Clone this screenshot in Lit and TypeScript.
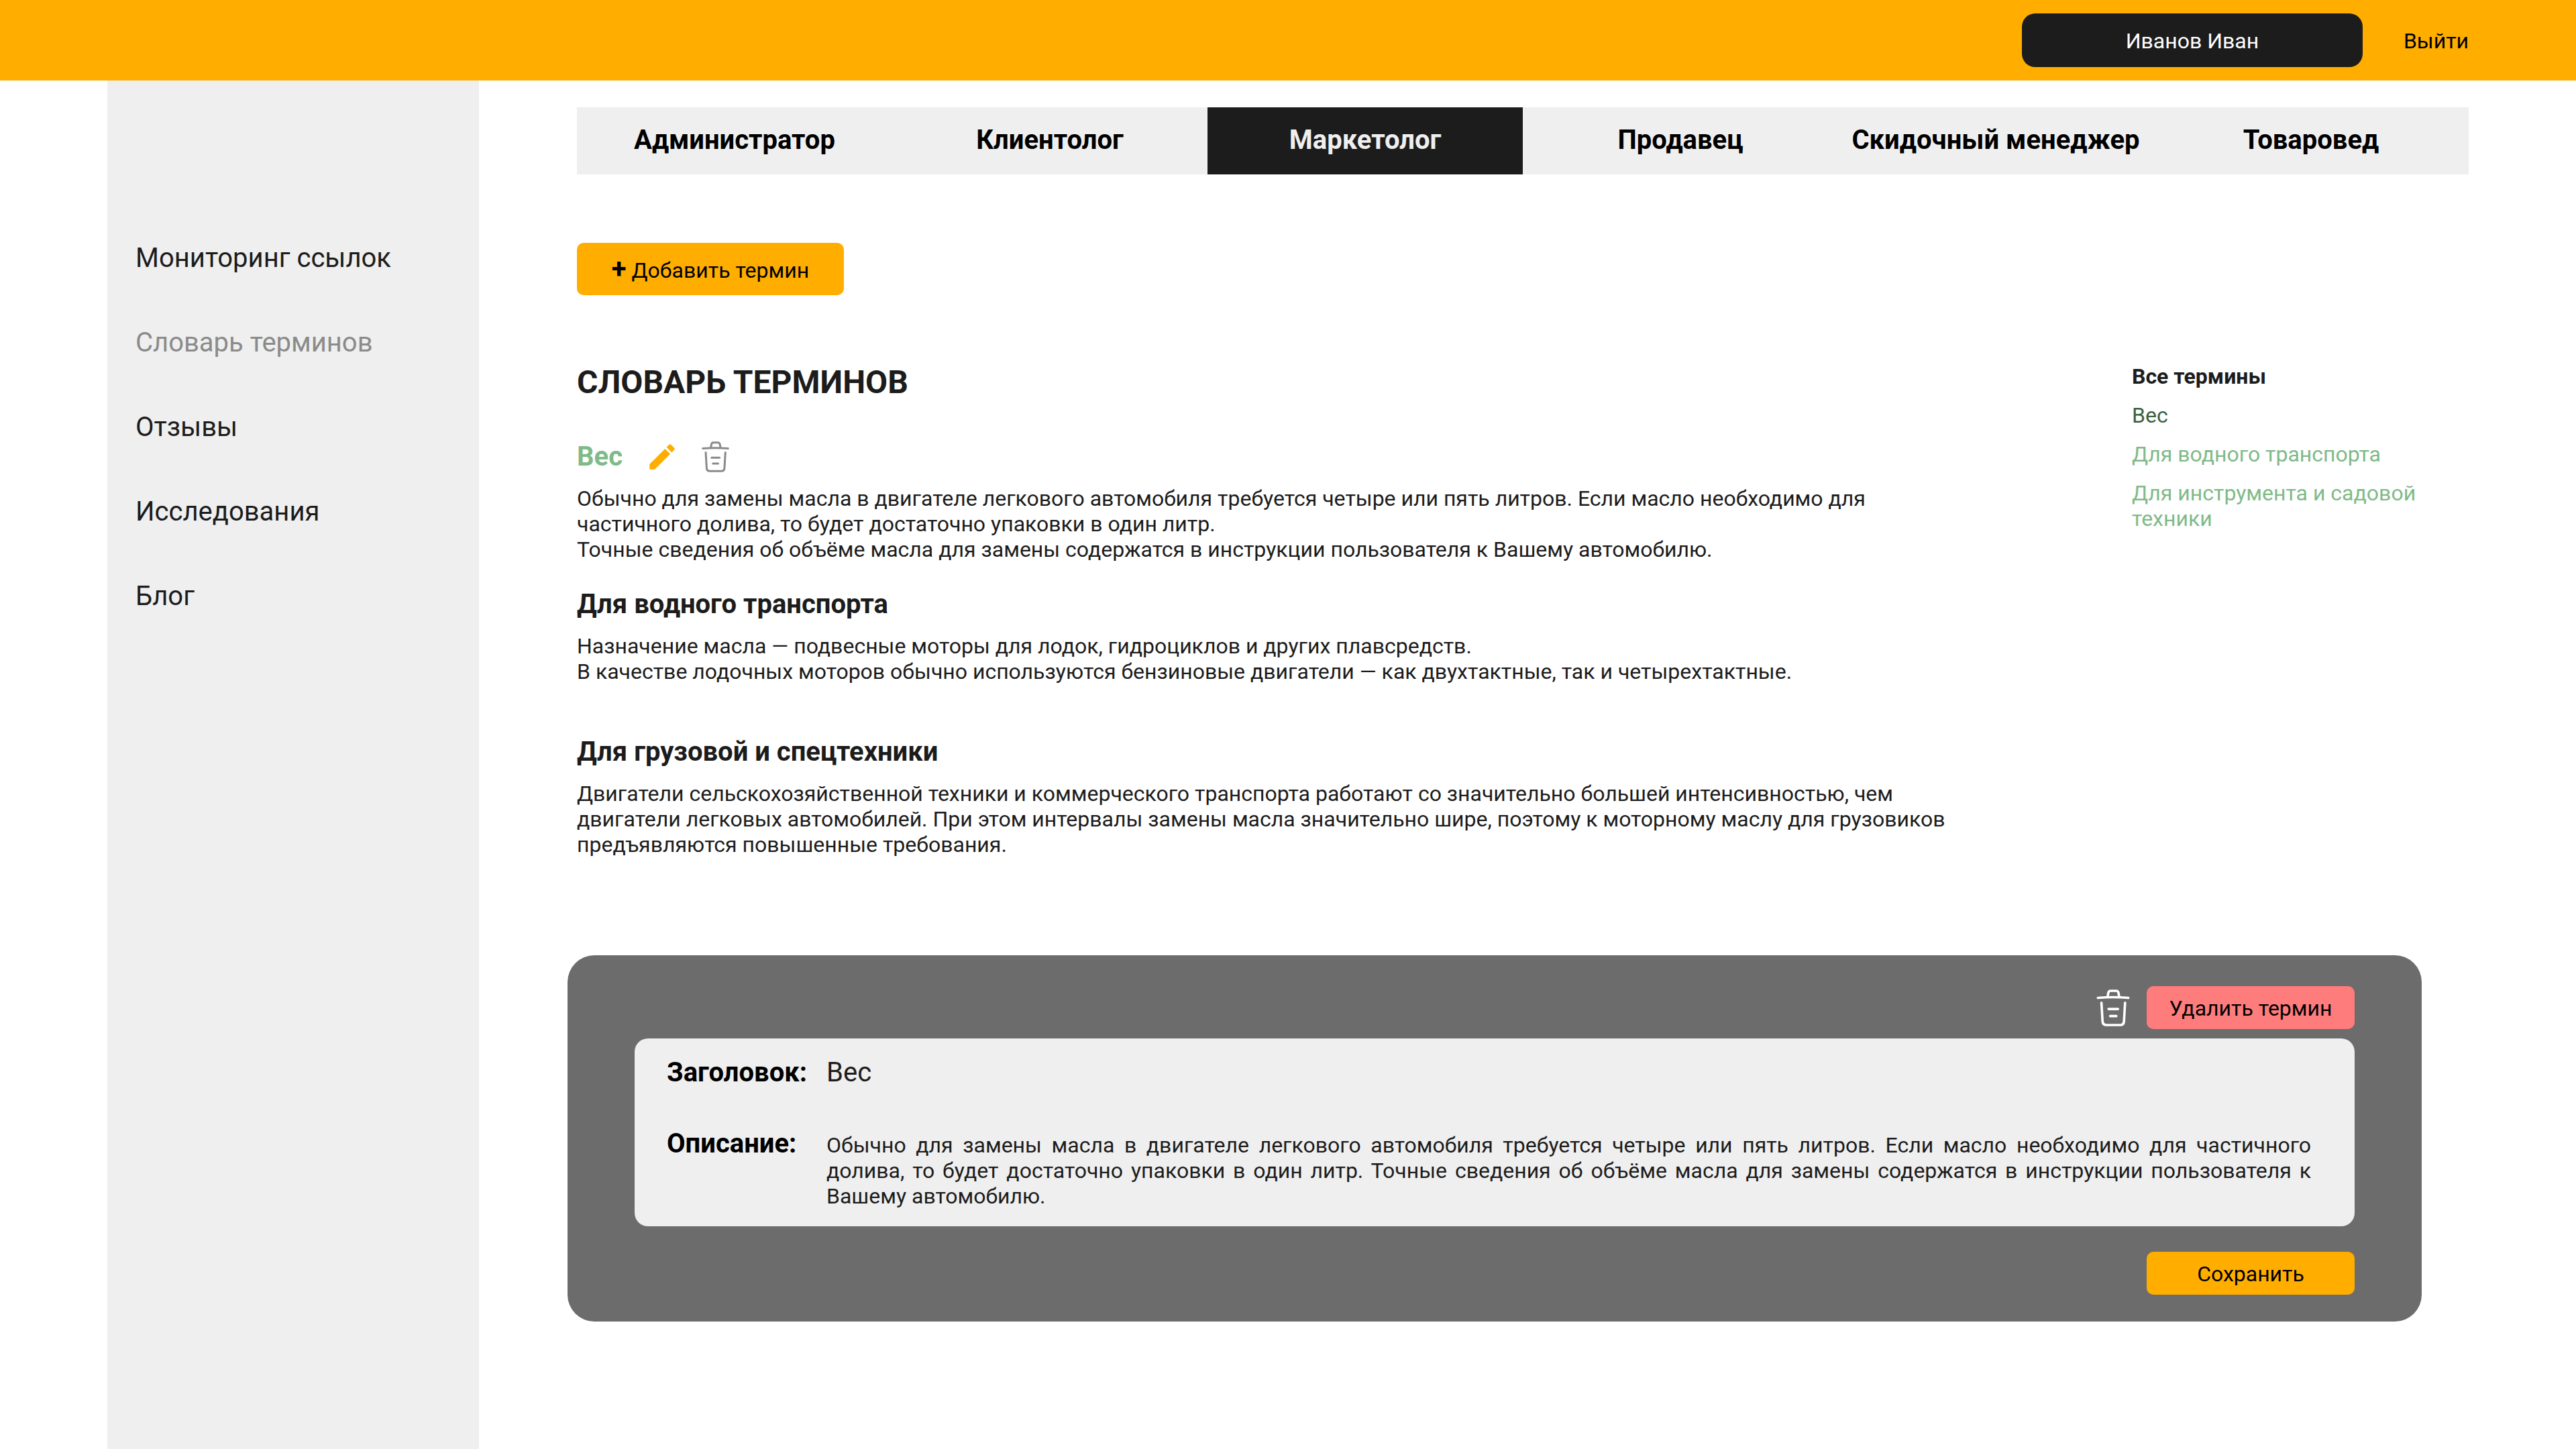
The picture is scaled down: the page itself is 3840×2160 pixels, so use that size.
import { LitElement, html, css, svg } from "lit";
import { customElement, property, state } from "lit/decorators.js";

interface Term {
  title: string;
  lines: string[];
  editable?: boolean;
}

const ROLES = [
  "Администратор",
  "Клиентолог",
  "Маркетолог",
  "Продавец",
  "Скидочный менеджер",
  "Товаровед",
];

const SECTIONS = [
  "Мониторинг ссылок",
  "Словарь терминов",
  "Отзывы",
  "Исследования",
  "Блог",
];

const TERMS: Term[] = [
  {
    title: "Вес",
    editable: true,
    lines: [
      "Обычно для замены масла в двигателе легкового автомобиля требуется четыре или пять литров. Если масло необходимо для частичного долива, то будет достаточно упаковки в один литр.",
      "Точные сведения об объёме масла для замены содержатся в инструкции пользователя к Вашему автомобилю.",
    ],
  },
  {
    title: "Для водного транспорта",
    lines: [
      "Назначение масла — подвесные моторы для лодок, гидроциклов и других плавсредств.",
      "В качестве лодочных моторов обычно используются бензиновые двигатели — как двухтактные, так и четырехтактные.",
      "",
    ],
  },
  {
    title: "Для грузовой и спецтехники",
    lines: [
      "Двигатели сельскохозяйственной техники и коммерческого транспорта работают со значительно большей интенсивностью, чем двигатели легковых автомобилей. При этом интервалы замены масла значительно шире, поэтому к моторному маслу для грузовиков предъявляются повышенные требования.",
    ],
  },
];

const TERM_LINKS = ["Вес", "Для водного транспорта", "Для инструмента и садовой техники"];

@customElement("trash-icon")
export class TrashIcon extends LitElement {
  static styles = css`
    :host {
      display: block;
    }
    .icon {
      display: block;
      width: 100%;
      height: 100%;
      fill: none;
      stroke: currentColor;
      stroke-width: 9;
      stroke-linecap: round;
      stroke-linejoin: round;
    }
  `;

  render() {
    return html`<svg class="icon" viewBox="0 0 122 136" aria-hidden="true">
      ${svg`
        <path d="M5 31Q61 26 117 31" />
        <path d="M41 26L43 13Q45 5 51 5H73Q79 5 81 13L83 26" />
        <path d="M18 49L22 118Q23 131 36 131H88Q100 131 101 118L105 49" />
        <path d="M44 72H79" />
        <path d="M50 98H73" />
      `}
    </svg>`;
  }
}

@customElement("term-article")
export class TermArticle extends LitElement {
  @property({ attribute: false }) term!: Term;

  static styles = css`
    :host {
      display: block;
    }
    .head {
      display: flex;
      align-items: center;
      height: 50px;
      margin-bottom: 18px;
    }
    .title {
      margin: 0;
      font-size: 40px;
      line-height: 50px;
      font-weight: 700;
    }
    .title.current {
      color: #7fba88;
    }
    .tool {
      display: block;
      margin: 0;
      padding: 0;
      border: 0;
      background: none;
      cursor: pointer;
    }
    .edit {
      width: 50px;
      height: 50px;
      margin-left: 34px;
      color: #ffae00;
    }
    .edit svg {
      display: block;
      width: 100%;
      height: 100%;
      fill: currentColor;
    }
    .remove {
      margin-left: 34px;
      color: #8b8b8b;
    }
    .remove trash-icon {
      width: 41px;
      height: 46px;
    }
    .line {
      margin: 0;
      min-height: 38px;
      font-size: 32px;
      line-height: 38px;
    }
  `;

  render() {
    const { title, lines, editable } = this.term;
    return html`
      <div class="head">
        <h2 class="title ${editable ? "current" : ""}">${title}</h2>
        ${editable
          ? html`
              <button class="tool edit" type="button" aria-label="Редактировать">
                <svg viewBox="0 0 24 24" aria-hidden="true">
                  <path
                    d="M3 17.25V21h3.75L17.81 9.94l-3.75-3.75L3 17.25zM20.71 7.04c.39-.39.39-1.02 0-1.41l-2.34-2.34c-.39-.39-1.02-.39-1.41 0l-1.83 1.83 3.75 3.75 1.83-1.83z"
                  />
                </svg>
              </button>
              <button class="tool remove" type="button" aria-label="Удалить">
                <trash-icon></trash-icon>
              </button>
            `
          : ""}
      </div>
      ${lines.map((line) => html`<p class="line">${line}</p>`)}
    `;
  }
}

@customElement("term-editor")
export class TermEditor extends LitElement {
  static styles = css`
    :host {
      display: block;
      box-sizing: border-box;
      padding: 46px 100px 40px;
      border-radius: 40px;
      background: #6c6c6c;
    }
    .actions {
      display: flex;
      align-items: center;
      justify-content: flex-end;
      gap: 25px;
    }
    .bin {
      width: 50px;
      height: 55px;
      color: #ffffff;
    }
    .button {
      width: 310px;
      height: 64px;
      margin: 0;
      padding: 2px 0 0;
      border: 0;
      border-radius: 10px;
      color: #000000;
      font: 400 32px/38px Roboto, "Liberation Sans", sans-serif;
      cursor: pointer;
    }
    .delete {
      background: #ff7c7c;
    }
    .save {
      background: #ffae00;
    }
    .card {
      display: grid;
      grid-template-columns: 238px minmax(0, 1fr);
      row-gap: 56px;
      margin: 14px 0 38px;
      padding: 26px 65px 26px 48px;
      border-radius: 20px;
      background: #efefef;
    }
    .label {
      color: #000000;
      font-size: 40px;
      line-height: 50px;
      font-weight: 700;
    }
    .field {
      display: block;
      box-sizing: border-box;
      width: 100%;
      margin: 0;
      padding: 0;
      border: 0;
      outline: 0;
      background: none;
      color: #1c1c1c;
      font-family: Roboto, "Liberation Sans", sans-serif;
    }
    .name {
      height: 50px;
      font-size: 40px;
      line-height: 50px;
    }
    .text {
      padding-top: 8px;
      font-size: 32px;
      line-height: 38px;
      text-align: justify;
      resize: none;
      overflow: hidden;
      field-sizing: content;
    }
  `;

  render() {
    return html`
      <div class="actions">
        <trash-icon class="bin"></trash-icon>
        <button class="button delete" type="button">Удалить термин</button>
      </div>
      <div class="card">
        <label class="label" for="term-name">Заголовок:</label>
        <input class="field name" id="term-name" type="text" .value=${TERMS[0].title} />
        <label class="label" for="term-text">Описание:</label>
        <textarea
          class="field text"
          id="term-text"
          rows="3"
          spellcheck="false"
          .value=${TERMS[0].lines.join(" ")}
        ></textarea>
      </div>
      <div class="actions">
        <button class="button save" type="button">Сохранить</button>
      </div>
    `;
  }
}

@customElement("app-root")
export class AppRoot extends LitElement {
  @state() private role = 2;

  static styles = css`
    :host {
      display: flex;
      flex-direction: column;
      min-height: 100vh;
      background: #ffffff;
      color: #1c1c1c;
      font-family: Roboto, "Liberation Sans", sans-serif;
      font-size: 32px;
      line-height: 38px;
    }
    .top {
      display: flex;
      align-items: center;
      justify-content: flex-end;
      gap: 61px;
      padding: 20px 160px;
      background: #ffae00;
    }
    .user {
      width: 508px;
      height: 80px;
      margin: 0;
      padding: 2px 0 0;
      border: 0;
      border-radius: 20px;
      background: #1c1c1c;
      color: #ffffff;
      font: inherit;
      cursor: pointer;
    }
    .exit {
      padding-top: 2px;
      color: #000000;
      text-decoration: none;
    }
    .body {
      display: flex;
      flex: 1;
      padding-left: 160px;
    }
    .sidebar {
      display: flex;
      flex: none;
      flex-direction: column;
      gap: 76px;
      box-sizing: border-box;
      width: 554px;
      padding: 240px 42px 76px;
      background: #efefef;
    }
    .section {
      color: #1c1c1c;
      font-size: 40px;
      line-height: 50px;
      text-decoration: none;
    }
    .section.current {
      color: #8b8b8b;
    }
    .main {
      flex: 1;
      min-width: 0;
      padding: 40px 0 78px;
    }
    .content {
      margin: 0 160px 146px 146px;
    }
    .tabs {
      display: grid;
      grid-template-columns: repeat(6, 1fr);
      background: #efefef;
    }
    .tab {
      margin: 0;
      padding: 24px 0 26px;
      border: 0;
      background: none;
      color: #000000;
      font: inherit;
      font-size: 40px;
      line-height: 50px;
      font-weight: 700;
      cursor: pointer;
    }
    .tab.current {
      background: #1c1c1c;
      color: #efefef;
    }
    .add {
      display: block;
      width: 398px;
      height: 78px;
      margin: 102px 0;
      padding: 2px 0 0;
      border: 0;
      border-radius: 10px;
      background: #ffae00;
      color: #000000;
      font: inherit;
      cursor: pointer;
    }
    .plus {
      font-size: 40px;
      font-weight: 700;
    }
    .columns {
      display: grid;
      grid-template-columns: minmax(0, 1fr) 502px;
      gap: 256px;
    }
    .heading {
      margin: 0 0 58px;
      font-size: 48px;
      line-height: 56px;
      font-weight: 700;
    }
    .terms {
      display: flex;
      flex-direction: column;
      gap: 38px;
    }
    .index {
      display: flex;
      flex-direction: column;
      align-items: flex-start;
      gap: 20px;
    }
    .index-title {
      margin: 0;
      font-size: 32px;
      line-height: 38px;
      font-weight: 700;
    }
    .link {
      color: #7fba88;
      text-decoration: none;
    }
    .link.current {
      color: #3a5f40;
    }
    .editor {
      margin: 0 230px 0 132px;
    }
  `;

  render() {
    return html`
      <header class="top">
        <button class="user" type="button">Иванов Иван</button>
        <a class="exit" href="#exit">Выйти</a>
      </header>
      <div class="body">
        <nav class="sidebar">
          ${SECTIONS.map(
            (name, i) =>
              html`<a class="section ${i === 1 ? "current" : ""}" href="#section-${i}">${name}</a>`
          )}
        </nav>
        <main class="main">
          <div class="content">
            <nav class="tabs">
              ${ROLES.map(
                (name, i) => html`<button
                  class="tab ${i === this.role ? "current" : ""}"
                  type="button"
                  @click=${() => (this.role = i)}
                >
                  ${name}
                </button>`
              )}
            </nav>
            <button class="add" type="button"><span class="plus">+</span> Добавить термин</button>
            <div class="columns">
              <section>
                <h1 class="heading">СЛОВАРЬ ТЕРМИНОВ</h1>
                <div class="terms">
                  ${TERMS.map((term) => html`<term-article .term=${term}></term-article>`)}
                </div>
              </section>
              <aside class="index">
                <h2 class="index-title">Все термины</h2>
                ${TERM_LINKS.map(
                  (name, i) =>
                    html`<a class="link ${i === 0 ? "current" : ""}" href="#term-${i}">${name}</a>`
                )}
              </aside>
            </div>
          </div>
          <term-editor class="editor"></term-editor>
        </main>
      </div>
    `;
  }
}
